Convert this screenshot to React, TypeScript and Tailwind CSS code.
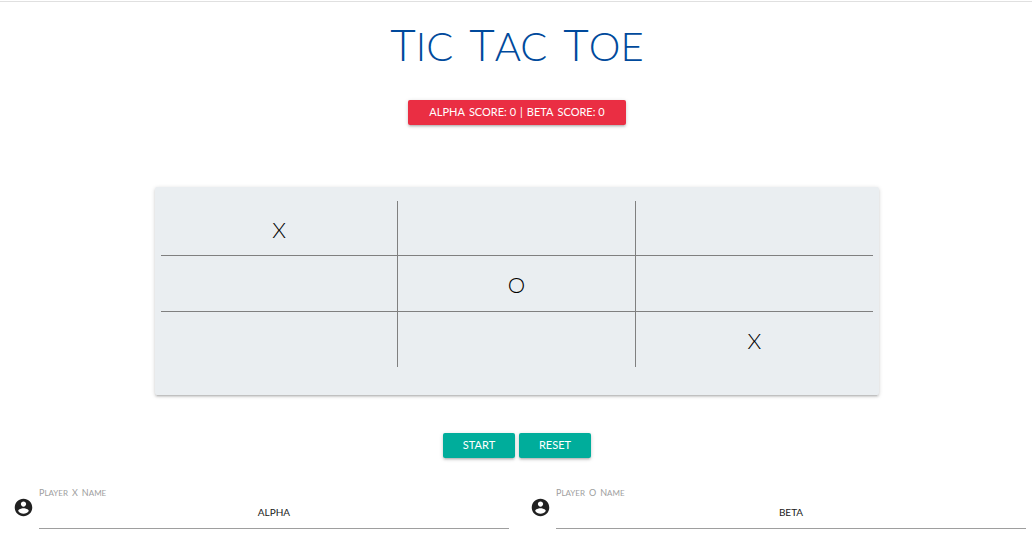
import { useState } from "react";

const raised =
  "shadow-[0_2px_2px_0_rgba(0,0,0,0.1),0_3px_1px_-2px_rgba(0,0,0,0.08),0_1px_4px_0_rgba(0,0,0,0.16)]";

const initialBoard = ["X", "", "", "", "O", "", "", "", "X"];

/* Capitals set slightly larger than the rest of each word. */
function TitleWord({ word }: { word: string }) {
  return (
    <span>
      {word[0]}
      <span className="text-[40px]">{word.slice(1)}</span>
    </span>
  );
}

function LabelWord({ word }: { word: string }) {
  return (
    <span>
      <span className="text-[9px]">{word[0]}</span>
      {word.slice(1)}
    </span>
  );
}

function AccountIcon() {
  return (
    <svg viewBox="0 0 24 24" className="mt-[11px] size-[21px] shrink-0 fill-[#212121]" aria-hidden="true">
      <path d="M12 2C6.48 2 2 6.48 2 12s4.48 10 10 10 10-4.48 10-10S17.52 2 12 2zm0 3c1.66 0 3 1.34 3 3s-1.34 3-3 3-3-1.34-3-3 1.34-3 3-3zm0 14.2c-2.5 0-4.71-1.28-6-3.22.03-1.99 4-3.08 6-3.08 1.99 0 5.97 1.09 6 3.08-1.29 1.94-3.5 3.22-6 3.22z" />
    </svg>
  );
}

type PlayerProps = {
  id: string;
  mark: string;
  value: string;
  onChange: (value: string) => void;
};

function PlayerField({ id, mark, value, onChange }: PlayerProps) {
  return (
    <div className="flex gap-[5px] pl-[5px]">
      <AccountIcon />
      <div className="min-w-0 flex-1">
        <label htmlFor={id} className="flex h-[14px] items-baseline gap-1 text-[8px] leading-[14px] text-[#9e9e9e]">
          <LabelWord word="PLAYER" />
          <LabelWord word={mark} />
          <LabelWord word="NAME" />
        </label>
        <input
          id={id}
          value={value}
          onChange={(e) => onChange(e.target.value)}
          className="block h-[29px] w-full border-b border-[#9e9e9e] bg-transparent pb-[4px] text-center text-[10px] text-[#212121] outline-none"
        />
      </div>
    </div>
  );
}

export default function App() {
  const [board, setBoard] = useState(initialBoard);
  const [playerX, setPlayerX] = useState("ALPHA");
  const [playerO, setPlayerO] = useState("BETA");

  const play = (index: number) => {
    if (board[index]) return;
    const xs = board.filter((c) => c === "X").length;
    const os = board.filter((c) => c === "O").length;
    setBoard(board.map((c, i) => (i === index ? (xs > os ? "O" : "X") : c)));
  };
  const clear = () => setBoard(Array(9).fill(""));

  return (
    <div className="bg-white font-['Lato','Open_Sans',sans-serif] text-[#212121]">
      <div className="h-0.5 border-b border-[#e0e0e0]" />
      <main className="flex flex-col items-center pr-1.5 pl-2">
        <h1 className="mt-3.5 flex items-baseline gap-4 text-[44px] leading-[56px] font-light text-[#004a9c]">
          <TitleWord word="TIC" />
          <TitleWord word="TAC" />
          <TitleWord word="TOE" />
        </h1>
        <div
          className={`mt-[26px] flex h-[25px] items-center gap-1 rounded-xs bg-[#ea2e43] px-[21px] text-[11px] text-white ${raised}`}
        >
          <span>{playerX}</span>
          <span>SCORE: 0</span>
          <span>|</span>
          <span>{playerO}</span>
          <span>SCORE: 0</span>
        </div>

        <section
          aria-label="Board"
          className={`mt-[62px] w-full max-w-[724px] rounded-xs bg-[#eaeef1] px-1.5 pt-3.5 pb-7 ${raised}`}
        >
          <div className="grid h-[166px] grid-cols-3 grid-rows-3">
            {board.map((cell, i) => (
              <button
                key={i}
                type="button"
                aria-label={`Cell ${i + 1}`}
                onClick={() => play(i)}
                className={`flex items-center justify-center border-[#808080] pt-0.5 text-[22px] font-light text-black ${
                  i % 3 < 2 ? "border-r" : ""
                } ${i < 6 ? "border-b" : ""}`}
              >
                {cell}
              </button>
            ))}
          </div>
        </section>

        <div className="mt-[38px] flex gap-1">
          <button
            type="button"
            onClick={clear}
            className={`h-[25px] w-[72px] rounded-xs bg-[#00ad9b] text-[11px] text-white ${raised}`}
          >
            START
          </button>
          <button
            type="button"
            onClick={clear}
            className={`h-[25px] w-[72px] rounded-xs bg-[#00ad9b] text-[11px] text-white ${raised}`}
          >
            RESET
          </button>
        </div>

        <div className="mt-7 grid w-full grid-cols-2 gap-4">
          <PlayerField id="player-x" mark="X" value={playerX} onChange={setPlayerX} />
          <PlayerField id="player-o" mark="O" value={playerO} onChange={setPlayerO} />
        </div>
      </main>
    </div>
  );
}
